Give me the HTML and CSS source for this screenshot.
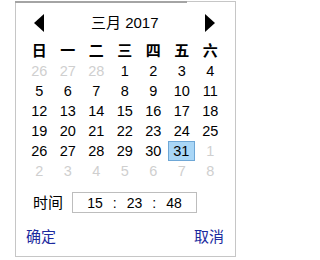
FILE: index.html
```html
<!DOCTYPE html>
<html lang="zh">
<head>
<meta charset="utf-8">
<link rel="stylesheet" href="styles.css">
</head>
<body>
<div class="picker">
  <div class="head">
    <span class="nav"><svg width="10" height="18" viewBox="0 0 10 18"><polygon points="10,0 10,18 0,9" fill="#000"/></svg></span>
    <span class="title">三月 2017</span>
    <span class="nav"><svg width="10" height="18" viewBox="0 0 10 18"><polygon points="0,0 0,18 10,9" fill="#000"/></svg></span>
  </div>
  <div class="grid">
    <span class="wk">日</span><span class="wk">一</span><span class="wk">二</span><span class="wk">三</span><span class="wk">四</span><span class="wk">五</span><span class="wk">六</span>
    <span class="d off">26</span><span class="d off">27</span><span class="d off">28</span><span class="d">1</span><span class="d">2</span><span class="d">3</span><span class="d">4</span>
    <span class="d">5</span><span class="d">6</span><span class="d">7</span><span class="d">8</span><span class="d">9</span><span class="d">10</span><span class="d">11</span>
    <span class="d">12</span><span class="d">13</span><span class="d">14</span><span class="d">15</span><span class="d">16</span><span class="d">17</span><span class="d">18</span>
    <span class="d">19</span><span class="d">20</span><span class="d">21</span><span class="d">22</span><span class="d">23</span><span class="d">24</span><span class="d">25</span>
    <span class="d">26</span><span class="d">27</span><span class="d">28</span><span class="d">29</span><span class="d">30</span><span class="d sel">31</span><span class="d off">1</span>
    <span class="d off">2</span><span class="d off">3</span><span class="d off">4</span><span class="d off">5</span><span class="d off">6</span><span class="d off">7</span><span class="d off">8</span>
  </div>
  <div class="time">
    <span class="label">时间</span>
    <div class="box"><span>15</span><span>:</span><span>23</span><span>:</span><span>48</span></div>
  </div>
  <div class="actions">
    <span class="btn">确定</span>
    <span class="btn">取消</span>
  </div>
</div>
</body>
</html>
```
FILE: styles.css
```css
html, body {
  margin: 0;
  padding: 0;
  background: #fff;
}
body {
  font-family: "Liberation Sans", "Noto Sans CJK SC", sans-serif;
  font-size: 14px;
  color: #000;
}
.picker {
  position: relative;
  box-sizing: border-box;
  margin: 1px 0 0 15px;
  width: 221px;
  height: 256px;
  border: 1px solid #c6c6c6;
  padding-top: 11px;
}
.picker::before {
  content: "";
  position: absolute;
  top: -1px;
  left: -1px;
  width: 172px;
  height: 2px;
  background: #a4a4a4;
}
.head {
  margin-left: 9px;
  width: 199.5px;
  height: 20px;
  display: grid;
  grid-template-columns: 28.5px 1fr 28.5px;
  align-items: center;
  margin-bottom: 8px;
}
.nav {
  display: flex;
  justify-content: center;
  align-items: center;
  height: 20px;
}
.nav svg { display: block; }
.title {
  text-align: center;
  line-height: 20px;
  font-size: 15px;
}
.grid {
  margin-left: 9px;
  width: 199.5px;
  display: grid;
  grid-template-columns: repeat(7, 28.5px);
  grid-auto-rows: 20px;
}
.wk, .d {
  display: flex;
  align-items: center;
  justify-content: center;
  line-height: 20px;
  box-sizing: border-box;
}
.wk { font-weight: bold; font-size: 15px; }
.d { font-size: 14.5px; }
.off { color: #cfcfcf; }
.sel {
  background: #a9d6f6;
  border: 1px solid #6ea7d6;
  margin: 0 1px 0 0;
}
.time {
  margin-top: 11px;
  padding-left: 17px;
  display: flex;
  align-items: center;
  height: 21px;
}
.label {
  width: 30px;
  margin-right: 9px;
  line-height: 20px;
  font-size: 15px;
}
.box {
  box-sizing: border-box;
  width: 125px;
  height: 21px;
  border: 1px solid #bdbdbd;
  display: flex;
  justify-content: center;
  align-items: center;
  gap: 10px;
}
.actions {
  margin-top: 14px;
  padding: 0 11px 0 10px;
  display: flex;
  justify-content: space-between;
  height: 20px;
  align-items: center;
}
.btn {
  color: #1c2a9e;
  font-size: 15px;
  line-height: 20px;
}
```
